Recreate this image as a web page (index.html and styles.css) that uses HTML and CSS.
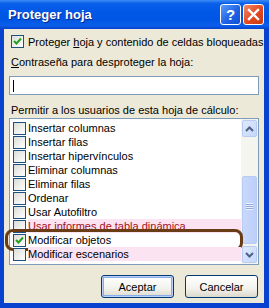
FILE: index.html
```html
<!DOCTYPE html>
<html lang="es">
<head>
  <meta charset="UTF-8">
  <title>Proteger hoja</title>
  <link rel="stylesheet" href="styles.css">
</head>
<body>

<div class="window">
  <!-- Title bar -->
  <div class="titlebar">
    <span class="title">Proteger hoja</span>
    <div class="tb-buttons">
      <div class="tb-btn help">?</div>
      <div class="tb-btn close">
        <svg width="13" height="13" viewBox="0 0 13 13"><path d="M2 2 L11 11 M11 2 L2 11" stroke="#fff" stroke-width="2.4" stroke-linecap="square"/></svg>
      </div>
    </div>
  </div>

  <div class="content">
    <div class="check-row main">
      <span class="box"><svg width="11" height="11" viewBox="0 0 11 11"><path d="M2 5 L4.5 7.5 L9 2.5" stroke="#21a121" stroke-width="2" fill="none"/></svg></span>
      <span class="nowrap">Proteger <u>h</u>oja y contenido de celdas bloqueadas</span>
    </div>

    <div class="label pwd"><u>C</u>ontraseña para desproteger la hoja:</div>
    <div class="input"><span class="caret"></span></div>

    <div class="label allow">Permitir a los usuarios de esta hoja de cálculo:</div>

    <!-- Permissions list -->
    <div class="listbox">
      <div class="items">
        <div class="row"><span class="box"></span><span class="txt">Insertar columnas</span></div>
        <div class="row"><span class="box"></span><span class="txt">Insertar filas</span></div>
        <div class="row"><span class="box"></span><span class="txt">Insertar hipervínculos</span></div>
        <div class="row"><span class="box"></span><span class="txt">Eliminar columnas</span></div>
        <div class="row"><span class="box"></span><span class="txt">Eliminar filas</span></div>
        <div class="row"><span class="box"></span><span class="txt">Ordenar</span></div>
        <div class="row"><span class="box"></span><span class="txt">Usar Autofiltro</span></div>
        <div class="row pink"><span class="box"></span><span class="txt red">Usar informes de tabla dinámica</span></div>
        <div class="row marked">
          <span class="box"><svg width="11" height="11" viewBox="0 0 11 11"><path d="M2 5 L4.5 7.5 L9 2.5" stroke="#21a121" stroke-width="2" fill="none"/></svg></span>
          <span class="txt">Modificar objetos</span>
          <span class="ring"></span>
        </div>
        <div class="row pink"><span class="box"></span><span class="txt">Modificar escenarios</span></div>
      </div>
      <div class="scrollbar">
        <div class="sb-btn">
          <svg width="9" height="6" viewBox="0 0 9 6"><path d="M1 5 L4.5 1.5 L8 5" stroke="#4d6185" stroke-width="2" fill="none"/></svg>
        </div>
        <div class="sb-track">
          <div class="sb-thumb"><span class="grip"></span></div>
        </div>
        <div class="sb-btn">
          <svg width="9" height="6" viewBox="0 0 9 6"><path d="M1 1 L4.5 4.5 L8 1" stroke="#4d6185" stroke-width="2" fill="none"/></svg>
        </div>
      </div>
    </div>

    <div class="buttons">
      <button class="btn default">Aceptar</button>
      <button class="btn">Cancelar</button>
    </div>
  </div>
</div>

</body>
</html>
```

FILE: styles.css
```css
body { margin: 0; font-family: "Liberation Sans", Arial, sans-serif; font-size: 11px; color: #000; }
.window { width: 269px; height: 308px; box-sizing: border-box; background: #0842cf; display: flex; flex-direction: column; }

.titlebar { height: 29px; flex: none; display: flex; align-items: center; justify-content: space-between; padding: 0 5px 0 8px;
  background: linear-gradient(#3b8cf5 0%, #0a5fea 12%, #0058e6 40%, #0056e4 70%, #0b5ee9 88%, #0842cf 100%); }
.title { font-weight: bold; font-size: 13px; color: #fff; text-shadow: 1px 1px 0 #0a2a8a; }
.tb-buttons { display: flex; gap: 2px; }
.tb-btn { width: 19px; height: 19px; border: 1px solid #fff; border-radius: 3px; display: flex; align-items: center; justify-content: center; color: #fff; font-weight: bold; font-size: 15px; }
.help { background: linear-gradient(135deg, #5a9cfb, #1c5fe3 60%, #1450d6); }
.close { background: linear-gradient(135deg, #f08a68, #e2481f 55%, #c93a12); }

.content { flex: 1; background: #ece9d8; margin: 0 5px 5px 4px; padding: 0 5px; display: flex; flex-direction: column; }

.check-row { display: flex; align-items: center; height: 13px; margin-top: 6px; padding-left: 2px; gap: 4px; }
.nowrap { white-space: nowrap; }
.box { width: 11px; height: 11px; flex: none; border: 1px solid #1c5180; background: linear-gradient(135deg, #dcdcd7, #fff); display: flex; align-items: center; justify-content: center; }

.label { height: 13px; line-height: 13px; padding-left: 2px; white-space: nowrap; }
.pwd { margin-top: 8px; }
.input { height: 17px; margin-top: 7px; border: 1px solid #7f9db9; background: #fff; display: flex; align-items: center; padding-left: 3px; }
.caret { width: 1px; height: 12px; background: #000; }
.allow { margin-top: 9px; }

.listbox { height: 145px; margin-top: 1px; border: 1px solid #7f9db9; background: #fff; display: flex; }
.items { flex: 1; padding-top: 2px; }
.row { position: relative; height: 14px; display: flex; align-items: center; padding-left: 3px; gap: 2px; }
.txt { line-height: 14px; padding-right: 2px; white-space: nowrap; }
.pink .txt { flex: 1; background: #fce3f1; }
.red { color: #a3121a; text-decoration: underline; }
.ring { position: absolute; left: -5px; top: -4px; width: 232px; height: 16px; border: 3px solid #6a3c16; border-radius: 8px; }

.scrollbar { width: 17px; display: flex; flex-direction: column; background: #f4f3ee; }
.sb-btn { height: 15px; flex: none; margin: 1px; border: 1px solid #b8cbf3; border-radius: 2px; background: linear-gradient(135deg, #e0eafd, #c4d6fb); display: flex; align-items: center; justify-content: center; }
.sb-track { flex: 1; padding-top: 38px; background: #f5f5ef; }
.sb-thumb { height: 68px; margin: 0 1px; border: 1px solid #b8cbf3; border-radius: 2px; background: linear-gradient(90deg, #c9d8fc, #bccffa); display: flex; justify-content: center; padding-top: 26px; box-sizing: border-box; }
.grip { width: 7px; height: 7px; background: repeating-linear-gradient(#eef3ff 0 1px, #8ca6dc 1px 2px); }

.buttons { display: flex; justify-content: flex-end; gap: 11px; margin-top: 10px; padding-right: 1px; }
.btn { width: 73px; height: 23px; font-family: inherit; font-size: 11px; color: #000; border: 1px solid #003c74; border-radius: 3px;
  background: linear-gradient(#ffffff, #f2f2ed 60%, #dcd8cc); padding: 0; }
.default { box-shadow: inset 0 0 0 1px #bcd0f7, inset 0 0 0 2px #89adeb; }
```
